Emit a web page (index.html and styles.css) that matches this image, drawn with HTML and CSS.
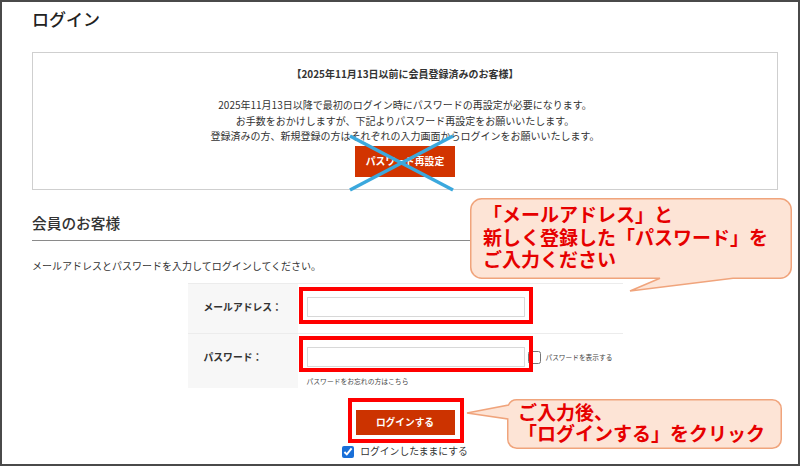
FILE: index.html
```html
<!DOCTYPE html>
<html lang="ja">
<head>
<meta charset="utf-8">
<title>ログイン</title>
<link rel="stylesheet" href="styles.css">
</head>
<body>
<div class="frame">
  <h1 class="title">ログイン</h1>

  <div class="notice">
    <p class="notice-head">【2025年11月13日以前に会員登録済みのお客様】</p>
    <p class="notice-body">2025年11月13日以降で最初のログイン時にパスワードの再設定が必要になります。<br>お手数をおかけしますが、下記よりパスワード再設定をお願いいたします。<br>登録済みの方、新規登録の方はそれぞれの入力画面からログインをお願いいたします。</p>
    <div class="reset-wrap">
      <a class="btn reset-btn">パスワード再設定</a>
      <svg class="cross" viewBox="0 0 103 54" width="103" height="54" aria-hidden="true">
        <line x1="0" y1="0" x2="103" y2="54"/>
        <line x1="103" y1="0" x2="0" y2="54"/>
      </svg>
    </div>
  </div>

  <h2 class="section-title">会員のお客様</h2>
  <p class="lead">メールアドレスとパスワードを入力してログインしてください。</p>

  <div class="form">
    <div class="row">
      <div class="label">メールアドレス：</div>
      <div class="field">
        <span class="mark mark-email"><input class="input" type="text"></span>
      </div>
    </div>
    <div class="row row-pass">
      <div class="label">パスワード：</div>
      <div class="field">
        <div class="pass-line">
          <span class="mark mark-pass"><input class="input" type="password"></span>
          <label class="show"><input class="show-check" type="checkbox">パスワードを表示する</label>
        </div>
        <a class="forgot">パスワードをお忘れの方はこちら</a>
      </div>
    </div>
  </div>

  <div class="submit">
    <span class="mark mark-login"><button class="btn login-btn" type="button">ログインする</button></span>
    <label class="keep"><input class="keep-check" type="checkbox" checked>ログインしたままにする</label>
  </div>

  <div class="callout callout-1">
    <svg class="bubble" width="322" height="81" viewBox="0 0 322 81" aria-hidden="true">
      <path d="M11.75,0.75 H310.25 A11,11 0 0 1 321.25,11.75 V69.25 A11,11 0 0 1 310.25,80.25 H263 L160,93 L190,80.25 H11.75 A11,11 0 0 1 0.75,69.25 V11.75 A11,11 0 0 1 11.75,0.75 Z"/>
    </svg>
    <p class="callout-text">「メールアドレス」と<br>新しく登録した「パスワード」を<br>ご入力ください</p>
  </div>

  <div class="callout callout-2">
    <svg class="bubble" width="275" height="50" viewBox="0 0 275 50" aria-hidden="true">
      <path d="M9.75,0.75 H265.25 A9,9 0 0 1 274.25,9.75 V40.25 A9,9 0 0 1 265.25,49.25 H9.75 A9,9 0 0 1 0.75,40.25 V20 L-40,14 L1.5,6 A9,9 0 0 1 9.75,0.75 Z"/>
    </svg>
    <p class="callout-text">ご入力後、<br>「ログインする」をクリック</p>
  </div>
</div>
</body>
</html>
```

FILE: styles.css
```css
* { box-sizing: border-box; }

html, body {
  margin: 0;
  padding: 0;
  background: #fff;
}

.frame {
  position: relative;
  width: 800px;
  height: 466px;
  border: 2px solid #4a4a4a;
  padding: 0 20px 0 30px;
  overflow: hidden;
  background: #fff;
  color: #333;
  font-family: "Noto Sans CJK JP", "Noto Sans", sans-serif;
}

.title {
  margin: 0;
  padding-top: 5px;
  font-size: 17px;
  line-height: 24px;
  font-weight: 500;
  color: #222;
}

.notice {
  margin-top: 21px;
  height: 138px;
  border: 1px solid #cfcfcf;
  padding-top: 13px;
  text-align: center;
}

.notice-head {
  margin: 0;
  font-size: 10px;
  line-height: 15px;
  font-weight: 700;
  color: #333;
}

.notice-body {
  margin: 16px 0 0;
  font-size: 10px;
  line-height: 15.5px;
  color: #333;
}

.reset-wrap {
  position: relative;
  display: inline-block;
  margin-top: 2px;
  vertical-align: top;
}

.btn {
  display: inline-block;
  border: none;
  color: #fff;
  font-family: inherit;
  font-weight: 700;
  text-align: center;
  cursor: pointer;
}

.reset-btn {
  width: 100px;
  height: 31px;
  line-height: 31px;
  font-size: 9.8px;
  background: #d23400;
}

.cross {
  position: absolute;
  left: -5px;
  top: -10px;
  overflow: visible;
}

.cross line {
  stroke: #3ba8dd;
  stroke-width: 3.5;
}

.section-title {
  margin: 23px 0 0;
  padding-bottom: 7px;
  border-bottom: 1px solid #8a8a8a;
  font-size: 14.7px;
  line-height: 20px;
  font-weight: 500;
  color: #333;
}

.lead {
  margin: 17px 0 0;
  font-size: 10px;
  line-height: 15px;
  color: #333;
}

.form {
  width: 435px;
  margin: 10px auto 0;
}

.row {
  display: flex;
  border-top: 1px solid #ececec;
}

.label {
  width: 110px;
  flex: none;
  background: #f7f7f7;
  padding: 13px 0 0 16px;
  font-size: 9.8px;
  line-height: 20px;
  font-weight: 700;
  color: #333;
}

.field {
  flex: 1;
  padding: 13px 0 12px 9px;
}

.row-pass .field {
  padding-bottom: 2px;
}

.input {
  display: block;
  width: 218px;
  height: 20px;
  margin: 0;
  padding: 0 4px;
  border: 1px solid #d8d8d8;
  background: #fff;
}

.mark {
  position: relative;
  display: inline-block;
  vertical-align: top;
}

.mark::after {
  content: "";
  position: absolute;
  border: 4px solid #ff0000;
  pointer-events: none;
}

.mark-email::after { top: -10px; left: -8px; right: -8px; bottom: -7px; }
.mark-pass::after { top: -11px; left: -8px; right: -8px; bottom: -5px; }
.mark-login::after { top: -9px; left: -8px; right: -9px; bottom: -8px; }

.pass-line {
  display: flex;
  align-items: center;
}

.show {
  display: flex;
  align-items: center;
  margin-left: 3px;
  font-size: 6.7px;
  line-height: 10px;
  color: #444;
}

.show-check {
  width: 13px;
  height: 13px;
  margin: 1px 5px 0 0;
}

.forgot {
  display: block;
  margin-top: 9px;
  font-size: 6.8px;
  line-height: 10px;
  color: #444;
}

.submit {
  display: flex;
  flex-direction: column;
  align-items: center;
  margin-top: 19px;
}

.login-btn {
  width: 99px;
  height: 25px;
  padding: 0;
  font-size: 9.7px;
  line-height: 25px;
  background: #cc3300;
}

.keep {
  display: flex;
  align-items: center;
  margin-top: 10px;
  font-size: 9.8px;
  line-height: 13px;
  color: #333;
}

.keep-check {
  width: 12px;
  height: 12px;
  margin: 0 6px 0 0;
  accent-color: #1a6fd8;
}

.callout {
  position: absolute;
}

.callout-1 {
  left: 468px;
  top: 196px;
  width: 322px;
  height: 81px;
}

.callout-2 {
  left: 505px;
  top: 397px;
  width: 275px;
  height: 50px;
}

.bubble {
  position: absolute;
  left: 0;
  top: 0;
  overflow: visible;
}

.bubble path {
  fill: #fde4d6;
  stroke: #f0a47c;
  stroke-width: 1.5;
}

.callout-text {
  position: relative;
  margin: 0;
  color: #e60000;
  font-weight: 700;
  font-size: 19px;
  white-space: nowrap;
}

.callout-1 .callout-text {
  padding: 5px 0 0 13px;
  line-height: 22.5px;
}

.callout-2 .callout-text {
  padding: 2px 0 0 11px;
  line-height: 21px;
}
```
